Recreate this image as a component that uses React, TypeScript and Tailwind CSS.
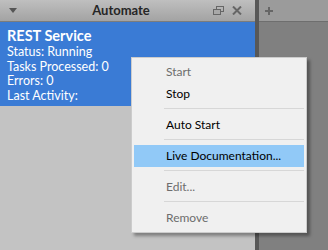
import React from "react";

type Item = { label: string; disabled?: boolean; active?: boolean } | "sep";

const items: Item[] = [
    { label: "Start", disabled: true },
    { label: "Stop" },
    "sep",
    { label: "Auto Start" },
    "sep",
    { label: "Live Documentation...", active: true },
    "sep",
    { label: "Edit...", disabled: true },
    "sep",
    { label: "Remove", disabled: true },
];

export default function App() {
    return (
        <div
            className="relative w-[328px] h-[250px] flex overflow-hidden bg-[#808080]"
            style={{ fontFamily: 'Lato, "Noto Sans", sans-serif' }}
        >
            {/* Automate panel */}
            <div className="w-[255px] flex flex-col bg-[#c3c3c3]">
                <div className="h-[22px] flex items-center px-[9px] bg-gradient-to-b from-[#bfbfbf] to-[#a3a3a3] border-b border-[#7c7c7c]">
                    <svg width="8" height="6" viewBox="0 0 8 6">
                        <path d="M0 0 H8 L4 5 Z" fill="#555" />
                    </svg>
                    <span className="flex-1 text-center text-[13px] font-bold text-[#262626] pl-[12px]">Automate</span>
                    <div className="flex items-center gap-[8px] pr-[4px]">
                        <svg width="11" height="9" viewBox="0 0 11 9">
                            <rect x="3.5" y="0.5" width="7" height="5" fill="none" stroke="#666" />
                            <rect x="0.5" y="3.5" width="7" height="5" fill="#a8a8a8" stroke="#666" />
                        </svg>
                        <svg width="10" height="9" viewBox="0 0 10 9">
                            <path d="M1 0.5 L9 8.5 M9 0.5 L1 8.5" stroke="#666" strokeWidth="2" />
                        </svg>
                    </div>
                </div>
                <div className="h-[84px] bg-[#3a7bd5] text-white px-[7px] pt-[5px]">
                    <div className="text-[14.5px] font-bold leading-[18px]">REST Service</div>
                    <div className="text-[12.5px] leading-[14.5px]">Status: Running</div>
                    <div className="text-[12.5px] leading-[14.5px]">Tasks Processed: 0</div>
                    <div className="text-[12.5px] leading-[14.5px]">Errors: 0</div>
                    <div className="text-[12.5px] leading-[14.5px]">Last Activity:</div>
                </div>
            </div>

            {/* divider */}
            <div className="w-[4px] bg-[#585858]" />

            {/* right panel */}
            <div className="flex-1 flex flex-col">
                <div className="h-[22px] flex items-center pl-[5px] bg-[#9b9b9b] border-b border-[#6e6e6e]">
                    <svg width="10" height="10" viewBox="0 0 10 10">
                        <path d="M5 1 V9 M1 5 H9" stroke="#666" strokeWidth="2" />
                    </svg>
                </div>
            </div>

            {/* context menu */}
            <div className="absolute left-[131px] top-[57px] w-[176px] bg-[#f0f0f0] border border-[#cccccc] py-[3px] px-[2px] shadow-[3px_3px_3px_rgba(0,0,0,0.35)] text-[12px]">
                {items.map((item, i) =>
                    item === "sep" ? (
                        <div key={i} className="h-[9px] pt-[3px] pl-[30px]">
                            <div className="h-px bg-[#d7d7d7]" />
                        </div>
                    ) : (
                        <div
                            key={i}
                            className={`h-[22px] flex items-center pl-[32px] ${item.active ? "bg-[#91c9f7]" : ""} ${
                                item.disabled ? "text-[#6d6d6d]" : "text-black"
                            }`}
                        >
                            {item.label}
                        </div>
                    )
                )}
            </div>
        </div>
    );
}
